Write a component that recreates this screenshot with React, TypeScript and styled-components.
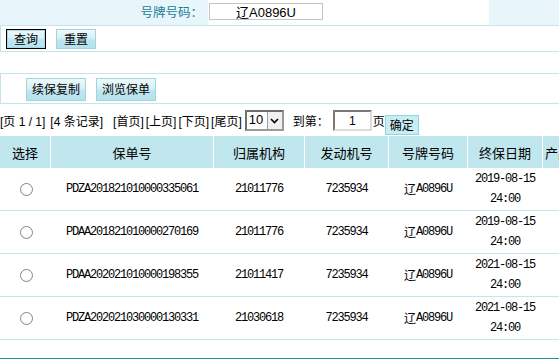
import React from "react";
import styled, { createGlobalStyle } from "styled-components";

const LINE = "#c3e6ec";
const CJK = `"Noto Sans CJK SC", "Liberation Sans", sans-serif`;
const SANS = `"Liberation Sans", "Noto Sans CJK SC", sans-serif`;
const MONO = `"Liberation Mono", "Noto Sans CJK SC", monospace`;

const GlobalStyle = createGlobalStyle`
  html, body { margin: 0; padding: 0; background: #fff; overflow: hidden; }
  body { font-family: ${SANS}; font-size: 12px; color: #000; }
  * { box-sizing: border-box; }
`;

const Page = styled.div`
  width: 559px;
  height: 363px;
  overflow: hidden;
`;

/* ---------- query form ---------- */
const FormRow = styled.div`
  display: grid;
  grid-template-columns: 208px 281px 1fr;
  height: 26px;
  border-bottom: 1px solid ${LINE};
`;

const LabelCell = styled.div`
  background: #e8f5fa;
  display: flex;
  align-items: center;
  justify-content: flex-end;
  padding: 0 5px 2px 0;
  color: #1b7d9c;
  font-family: ${CJK};
  font-size: 12.5px;
`;

const InputCell = styled.div`
  display: flex;
  align-items: center;
  padding: 0 0 2px 1px;
`;

const PlateInput = styled.input`
  width: 114px;
  height: 17px;
  border: 1px solid #c4c4c4;
  padding: 0;
  text-align: center;
  font-family: ${SANS};
  font-size: 13px;
  color: #000;
  outline: none;
`;

const ActionBar = styled.div`
  display: flex;
  align-items: center;
  gap: 10px;
  height: 26px;
  padding-left: 5px;
  border-left: 1px solid ${LINE};
  border-bottom: 1px solid ${LINE};
`;

const Button = styled.button<{ $w: number; $h: number; $focused?: boolean }>`
  width: ${(p) => p.$w}px;
  height: ${(p) => p.$h}px;
  padding: 0;
  font-family: ${CJK};
  font-size: 12px;
  color: #000;
  cursor: pointer;
  border: 1px solid ${(p) => (p.$focused ? "#000" : "#9fd5e2")};
  box-shadow: ${(p) => (p.$focused ? "inset 0 0 0 1px #a6dbe6" : "none")};
  background: linear-gradient(#eef9fc 0%, #d6f0f6 45%, #bfe6f0 55%, #b6e1ec 100%);
  display: flex;
  align-items: center;
  justify-content: center;
  line-height: 1;
`;

const ToolBox = styled.div`
  margin-top: 21px;
  display: flex;
  align-items: center;
  gap: 10px;
  height: 31px;
  padding: 1px 0 0 25px;
  border-top: 1px solid ${LINE};
  border-bottom: 1px solid ${LINE};
  border-left: 1px solid ${LINE};
`;

/* ---------- pagination ---------- */
const Pager = styled.div`
  display: flex;
  align-items: flex-start;
  height: 32px;
  padding-top: 6px;
  white-space: nowrap;
`;

const PagerText = styled.span<{ $ml?: number }>`
  margin-left: ${(p) => p.$ml ?? 0}px;
  margin-top: 4px;
  line-height: 16px;
  font-size: 12px;
`;

const FakeSelect = styled.div<{ $ml?: number }>`
  margin-left: ${(p) => p.$ml ?? 0}px;
  display: flex;
  width: 39px;
  height: 21px;
  border: 2px solid #6e6e6e;
  border-right-color: #9a9a9a;
  border-bottom-color: #9a9a9a;
  background: #fff;
`;

const SelectValue = styled.span`
  flex: 1;
  font-size: 13px;
  line-height: 16px;
  padding-left: 2px;
`;

const SelectArrow = styled.span`
  width: 15px;
  display: flex;
  align-items: center;
  justify-content: center;
  background: #f0f0f0;
  border-left: 1px solid #a0a0a0;
`;

const PageInput = styled.input`
  width: 39px;
  height: 21px;
  padding: 1px 0 0 0;
  border: 2px solid #7a7a7a;
  border-right-color: #dcdcdc;
  border-bottom-color: #dcdcdc;
  text-align: center;
  vertical-align: top;
  font-family: ${SANS};
  font-size: 12px;
  line-height: 14px;
  outline: none;
  margin-left: 4px;
`;

const ConfirmButton = styled.button`
  margin-top: 5px;
  width: 34px;
  height: 20px;
  padding: 0;
  border: 1px solid #93d3e2;
  background: #c9edf5;
  font-family: ${CJK};
  font-size: 12px;
  color: #000;
  line-height: 1;
`;

/* ---------- table ---------- */
const COLS = "50px 162px 90px 83px 78px 74px 56px";

const Table = styled.div`
  width: 599px;
`;

const HeadRow = styled.div`
  display: grid;
  grid-template-columns: ${COLS};
  column-gap: 1px;
  height: 32px;
  background: #fff;
`;

const HeadCell = styled.div`
  background: #c0e6ee;
  display: flex;
  align-items: center;
  justify-content: center;
  font-family: ${CJK};
  font-size: 13px;
  color: #000;
  white-space: nowrap;
  overflow: hidden;
`;

const BodyRow = styled.div`
  display: grid;
  grid-template-columns: ${COLS};
  column-gap: 1px;
  height: 43px;
  border-bottom: 1px solid ${LINE};
`;

const Cell = styled.div`
  display: flex;
  align-items: center;
  justify-content: center;
  text-align: center;
  font-family: ${MONO};
  font-size: 12px;
  letter-spacing: -1.2px;
  line-height: 20px;
  color: #000;
`;

const Radio = styled.span`
  width: 13px;
  height: 13px;
  border-radius: 50%;
  border: 1px solid #858585;
  background: radial-gradient(circle at 50% 40%, #fff 55%, #ececec 100%);
  margin-left: 2px;
`;

const Plate = styled.span`
  font-family: ${CJK};
  font-size: 12px;
  letter-spacing: 0;
`;

const Spacer = styled.div`
  height: 18px;
`;

const BottomRule = styled.div`
  height: 1px;
  background: #2a8d9f;
`;

const rows = [
  ["PDZA201821010000335061", "21011776", "2019-08-15 24:00"],
  ["PDAA201821010000270169", "21011776", "2019-08-15 24:00"],
  ["PDAA202021010000198355", "21011417", "2021-08-15 24:00"],
  ["PDZA202021030000130331", "21030618", "2021-08-15 24:00"],
];

const headers = ["选择", "保单号", "归属机构", "发动机号", "号牌号码", "终保日期", "产品名称"];

export default function App() {
  return (
    <Page>
      <GlobalStyle />
      <FormRow>
        <LabelCell>号牌号码：</LabelCell>
        <InputCell>
          <PlateInput readOnly value="辽A0896U" />
        </InputCell>
        <LabelCell />
      </FormRow>
      <ActionBar>
        <Button $w={40} $h={20} $focused>查询</Button>
        <Button $w={40} $h={20}>重置</Button>
      </ActionBar>

      <ToolBox>
        <Button $w={60} $h={23}>续保复制</Button>
        <Button $w={60} $h={23}>浏览保单</Button>
      </ToolBox>

      <Pager>
        <PagerText>[页 1 / 1]</PagerText>
        <PagerText $ml={5}>[4 条记录]</PagerText>
        <PagerText $ml={10}>[首页]</PagerText>
        <PagerText $ml={2}>[上页]</PagerText>
        <PagerText $ml={2}>[下页]</PagerText>
        <PagerText $ml={2}>[尾页]</PagerText>
        <FakeSelect $ml={3}>
          <SelectValue>10</SelectValue>
          <SelectArrow>
            <svg width="9" height="6" viewBox="0 0 9 6">
              <path d="M1 1 L4.5 4.5 L8 1" fill="none" stroke="#000" strokeWidth="1.6" />
            </svg>
          </SelectArrow>
        </FakeSelect>
        <PagerText $ml={9}>到第：</PagerText>
        <PageInput readOnly value="1" />
        <PagerText $ml={1}>页</PagerText>
        <ConfirmButton>确定</ConfirmButton>
      </Pager>

      <Table>
        <HeadRow>
          {headers.map((h) => (
            <HeadCell key={h}>{h}</HeadCell>
          ))}
        </HeadRow>
        {rows.map(([no, org, date]) => (
          <BodyRow key={no}>
            <Cell>
              <Radio />
            </Cell>
            <Cell>{no}</Cell>
            <Cell>{org}</Cell>
            <Cell>7235934</Cell>
            <Cell>
              <Plate>辽</Plate>A0896U
            </Cell>
            <Cell>{date}</Cell>
            <Cell />
          </BodyRow>
        ))}
        <Spacer />
        <BottomRule />
      </Table>
    </Page>
  );
}
